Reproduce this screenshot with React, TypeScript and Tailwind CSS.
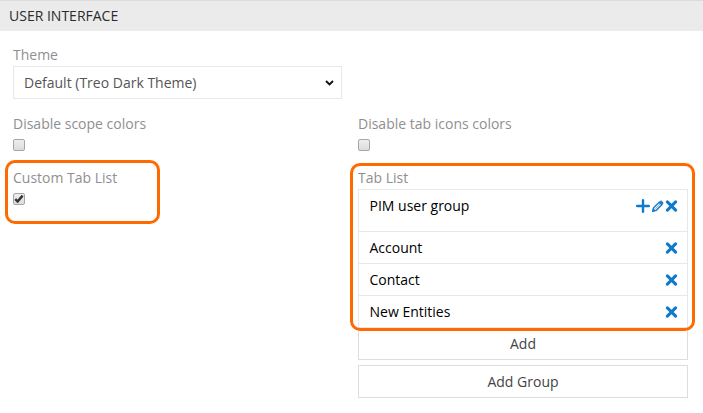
import type { ReactNode } from "react";

function Label({ children }: { children: ReactNode }) {
  return <div className="h-5 whitespace-nowrap text-[14px] leading-5 text-[#8f8f8f]">{children}</div>;
}

function Checkbox({ checked = false }: { checked?: boolean }) {
  return (
    <div
      role="checkbox"
      aria-checked={checked}
      className="flex h-3 w-3 items-center justify-center rounded-[2px] border border-[#a6a6a6] bg-linear-to-b from-[#eee] to-[#dcdcdc]"
    >
      {checked && (
        <svg width="10" height="10" viewBox="0 0 10 10" fill="none" stroke="#333" strokeWidth="2.4" className="shrink-0">
          <path d="M1.3 5.2 3.6 7.5 8.6 1.6" />
        </svg>
      )}
    </div>
  );
}

function Remove() {
  return (
    <svg width="13" height="12" viewBox="0 0 13 12" stroke="#0e7acb" strokeWidth="3" strokeLinecap="round">
      <path d="M2.4 1.9l8.2 8.2M10.6 1.9l-8.2 8.2" />
    </svg>
  );
}

function Plus() {
  return (
    <svg width="14" height="14" viewBox="0 0 14 14" stroke="#0e7acb" strokeWidth="2.4" strokeLinecap="round">
      <path d="M7 1.2v11.6M1.2 7h11.6" />
    </svg>
  );
}

function Pencil() {
  return (
    <svg width="12" height="12" viewBox="0 0 12 12" fill="none" stroke="#2478c4">
      <path d="M.8 11.2l.8-3.4L7.2 2.2l2.6 2.6-5.6 5.6-3.4.8Z" strokeWidth="1.5" />
      <path d="M3.2 8.8l5-5" strokeWidth=".6" />
      <path d="M8.2 1.2l2.6 2.6" strokeWidth="2.6" />
      <path d="M.8 11.2l.6-2.4 1.8 1.8Z" fill="#2478c4" />
    </svg>
  );
}

function Row({ name }: { name: string }) {
  return (
    <div className="flex h-8 items-center justify-between border-b border-[#e8e8e8] pr-[9px] pl-[10.5px]">
      <span>{name}</span>
      <Remove />
    </div>
  );
}

export default function App() {
  return (
    <div className="relative h-[413px] w-[703px] overflow-hidden bg-white font-['Open_Sans','Noto_Sans',sans-serif] text-[14px] leading-5 text-black">
      <header className="h-[31px] border-t border-[#dcdcdc] bg-[#ebebeb] pt-[5px] pl-[9px] text-[#2b2b2b]">USER INTERFACE</header>
      <main className="px-[13px] pt-[14px]">
        <Label>Theme</Label>
        <div className="mt-px flex h-[33px] w-[329px] items-center justify-between border border-[#e8e8e8] pr-[7px] pl-2.5 text-[#555]">
          <span>Default (Treo Dark Theme)</span>
          <svg width="9" height="6" viewBox="0 0 9 6" fill="none" stroke="#111" strokeWidth="1.9">
            <path d="M1 1 4.5 4.4 8 1" />
          </svg>
        </div>
        <div className="mt-[15px] grid grid-cols-[345px_330px]">
          <div>
            <Label>Disable scope colors</Label>
            <div className="mt-[5px]"><Checkbox /></div>
            <div className="mt-[17px]"><Label>Custom Tab List</Label></div>
            <div className="mt-[5px]"><Checkbox checked /></div>
          </div>
          <div>
            <Label>Disable tab icons colors</Label>
            <div className="mt-[5px]"><Checkbox /></div>
            <div className="mt-[17px]"><Label>Tab List</Label></div>
            <div className="mt-px border border-b-0 border-[#e8e8e8]">
              <div className="flex h-[42px] justify-between border-b border-[#e8e8e8] pt-1.5 pr-[9px] pl-[10.5px]">
                <span>PIM user group</span>
                <div className="flex h-5 items-center">
                  <Plus />
                  <div className="mr-px ml-0.5"><Pencil /></div>
                  <Remove />
                </div>
              </div>
              <Row name="Account" />
              <Row name="Contact" />
              <Row name="New Entities" />
            </div>
            <div className="flex h-8 items-center justify-center border border-t-0 border-[#ddd] text-[#444]">Add</div>
            <div className="mt-[5px] flex h-[33px] items-center justify-center border border-[#ddd] text-[#444]">Add Group</div>
          </div>
        </div>
      </main>
      <div className="absolute top-[160px] left-[5px] h-[64px] w-[155px] rounded-[10px] border-3 border-[#ff6a00]" />
      <div className="absolute top-[163px] left-[350px] h-[168px] w-[345px] rounded-[10px] border-3 border-[#ff6a00]" />
    </div>
  );
}
